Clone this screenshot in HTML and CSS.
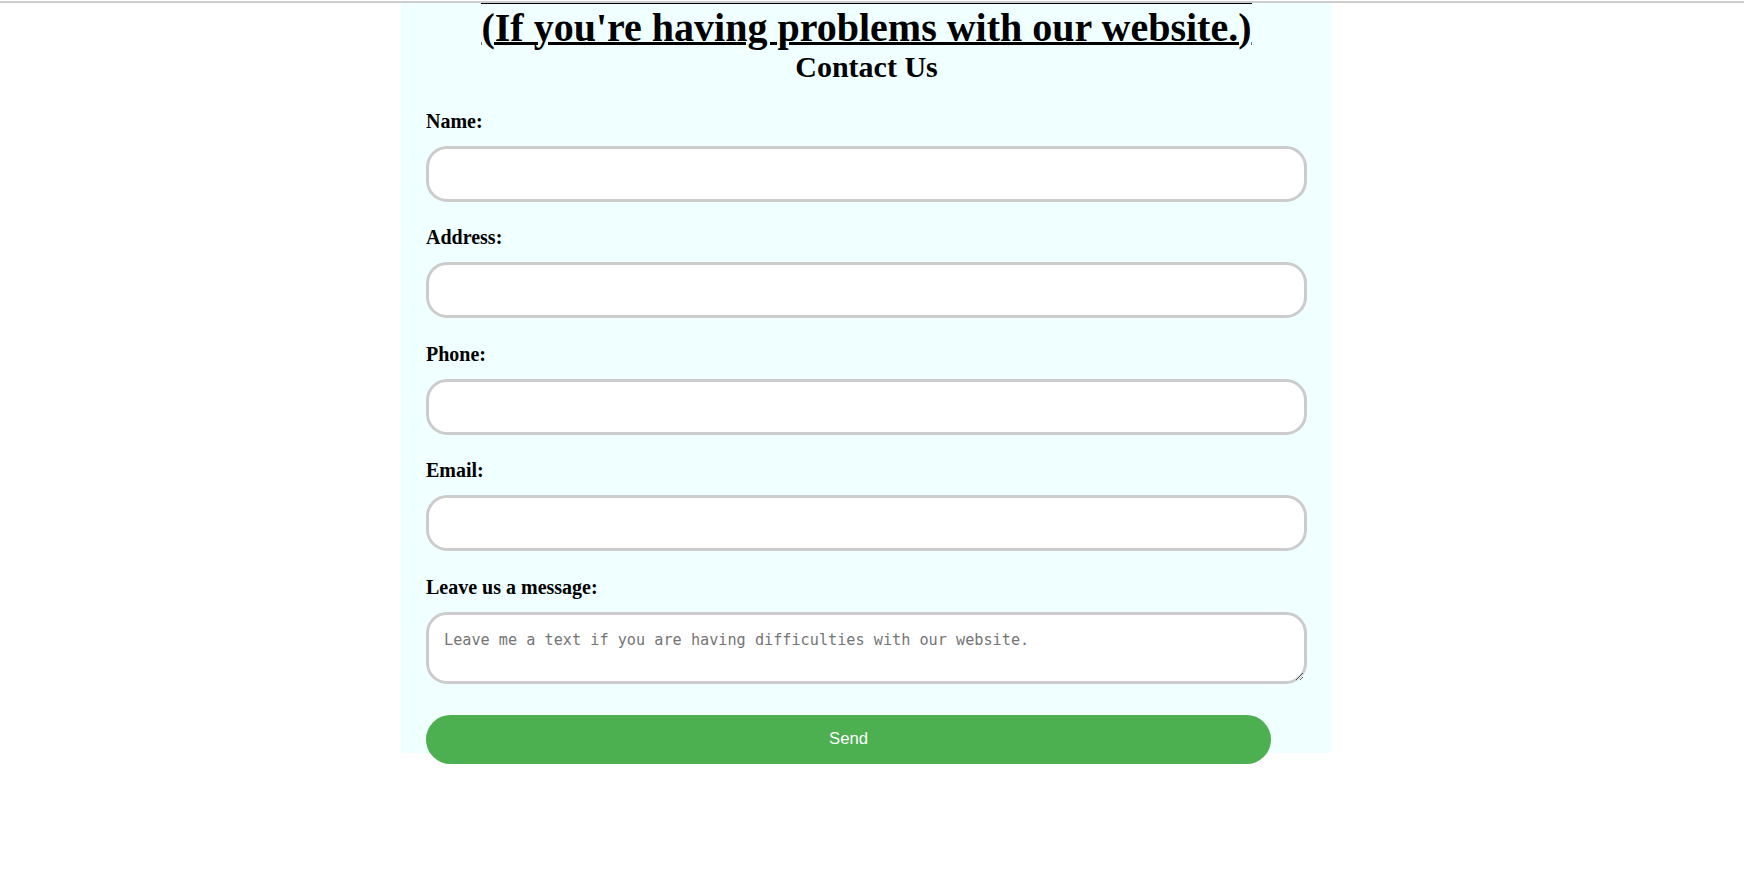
FILE: index.html
```html
<!DOCTYPE html>
<html lang="en">
<head>
<meta charset="utf-8">
<title>Contact Us</title>
<link rel="stylesheet" href="styles.css">
</head>
<body>
<div class="topline"></div>
<main class="panel">
  <h1 class="title"><a class="title-link" href="#">(If you're having problems with our website.)</a></h1>
  <h2 class="subtitle">Contact Us</h2>
  <form class="form">
    <label class="label" for="name">Name:</label>
    <input class="field" type="text" id="name">
    <label class="label" for="address">Address:</label>
    <input class="field" type="text" id="address">
    <label class="label" for="phone">Phone:</label>
    <input class="field" type="text" id="phone">
    <label class="label" for="email">Email:</label>
    <input class="field" type="text" id="email">
    <label class="label" for="msg">Leave us a message:</label>
    <textarea class="message" id="msg" placeholder="Leave me a text if you are having difficulties with our website."></textarea>
    <button class="send" type="button">Send</button>
  </form>
</main>
</body>
</html>
```
FILE: styles.css
```css
html, body {
  margin: 0;
  padding: 0;
  background: #ffffff;
}

body {
  font-family: "Liberation Serif", "Times New Roman", serif;
  color: #000;
  padding-bottom: 60px;
}

.topline {
  height: 3px;
  box-sizing: border-box;
  border-top: 1px solid #ffffff;
  background: #cdcdcd;
}

.panel {
  width: 931px;
  margin-left: 401px;
  padding: 0 25px;
  box-sizing: border-box;
  background: #f0ffff;
}

.title {
  margin: 0;
  display: flex;
  justify-content: center;
  font-size: 40px;
  font-weight: bold;
  line-height: 47px;
}

.title-link {
  display: block;
  color: #000;
  border-top: 1px solid #000;
  text-decoration: underline;
  text-decoration-thickness: 3px;
  text-underline-offset: 1px;
}

.subtitle {
  margin: 0;
  text-align: center;
  font-size: 30px;
  font-weight: bold;
  line-height: 32px;
}

.form {
  display: flex;
  flex-direction: column;
  align-items: flex-start;
  padding-top: 26.6px;
}

.label {
  display: block;
  font-size: 20px;
  font-weight: bold;
  line-height: 23px;
  margin-bottom: 13px;
}

.field {
  width: 100%;
  height: 56px;
  box-sizing: border-box;
  margin: 0 0 24.5px 0;
  padding: 15px 25px;
  border: 3px solid #cccccc;
  border-radius: 21px;
  background: #ffffff;
  font-size: 16.67px;
  outline: none;
}

.message {
  width: 100%;
  height: 72px;
  box-sizing: border-box;
  margin: 0 0 31.4px 0;
  padding: 16px 15px 14px;
  border: 3px solid #cccccc;
  border-radius: 21px;
  background: #ffffff;
  font-family: "DejaVu Sans Mono", "Liberation Mono", monospace;
  font-size: 15.2px;
  line-height: 18px;
  outline: none;
}

.message::placeholder {
  color: #757575;
}

.send {
  position: relative;
  width: 845px;
  height: 49px;
  margin-bottom: -11px;
  border: none;
  border-radius: 25px;
  background: #4caf50;
  color: #ffffff;
  font-family: "Liberation Sans", Arial, sans-serif;
  font-size: 16.67px;
  cursor: pointer;
}
```
